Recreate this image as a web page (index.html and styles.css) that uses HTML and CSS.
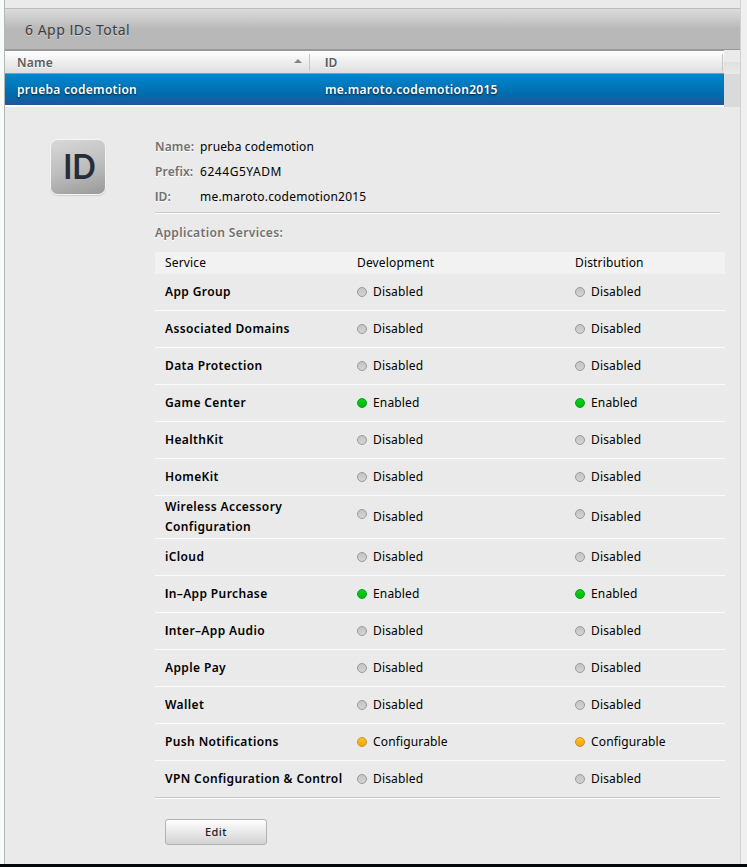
FILE: index.html
```html
<!DOCTYPE html>
<html lang="en">
<head>
<meta charset="utf-8">
<title>App IDs</title>
<link rel="stylesheet" href="styles.css">
</head>
<body>
<div class="page">
<main class="panel">
  <h1 class="title">6 App <i>I</i>Ds Total</h1>
  <div class="list">
    <div class="grid">
      <div class="cols">
        <span class="col-name">Name</span>
        <svg class="sort" width="8" height="4" viewBox="0 0 8 4"><path d="M4 0L8 4H0Z" fill="#858585"/></svg>
        <span class="col-id"><i>I</i>D</span>
      </div>
      <div class="selected"><span class="sel-name">prueba codemotion</span><span class="sel-id">me.maroto.codemotion2015</span></div>
    </div>
    <div class="gutter"></div>
  </div>
  <section class="detail">
    <div class="icon"><span>ID</span></div>
    <div class="info">
      <dl class="facts">
        <dt>Name:</dt><dd class="f1">prueba codemotion</dd>
        <dt>Prefix:</dt><dd class="f2">6244G5YADM</dd>
        <dt><i>I</i>D:</dt><dd class="f3">me.maroto.codemotion2015</dd>
      </dl>
      <h2 class="subtitle">Application Services:</h2>
      <div class="services">
        <div class="row head"><span>Service</span><span>Development</span><span>Distribution</span></div>
        <div class="row"><b>App Group</b><span class="st">Disabled</span><span class="st">Disabled</span></div>
        <div class="row"><b>Associated Domains</b><span class="st">Disabled</span><span class="st">Disabled</span></div>
        <div class="row"><b>Data Protection</b><span class="st">Disabled</span><span class="st">Disabled</span></div>
        <div class="row"><b>Game Center</b><span class="st on">Enabled</span><span class="st on">Enabled</span></div>
        <div class="row"><b>HealthKit</b><span class="st">Disabled</span><span class="st">Disabled</span></div>
        <div class="row"><b>HomeKit</b><span class="st">Disabled</span><span class="st">Disabled</span></div>
        <div class="row tall"><b>Wireless Accessory<br>Configuration</b><span class="st">Disabled</span><span class="st">Disabled</span></div>
        <div class="row"><b>iCloud</b><span class="st">Disabled</span><span class="st">Disabled</span></div>
        <div class="row"><b><i>I</i>n–App Purchase</b><span class="st on">Enabled</span><span class="st on">Enabled</span></div>
        <div class="row"><b><i>I</i>nter–App Audio</b><span class="st">Disabled</span><span class="st">Disabled</span></div>
        <div class="row"><b>Apple Pay</b><span class="st">Disabled</span><span class="st">Disabled</span></div>
        <div class="row"><b>Wallet</b><span class="st">Disabled</span><span class="st">Disabled</span></div>
        <div class="row"><b>Push Notifications</b><span class="st conf">Configurable</span><span class="st conf">Configurable</span></div>
        <div class="row last"><b>VPN Configuration &amp; Control</b><span class="st">Disabled</span><span class="st">Disabled</span></div>
      </div>
      <button class="edit">Edit</button>
    </div>
  </section>
</main>
</div>
</body>
</html>
```
FILE: styles.css
```css
* { box-sizing: border-box; }
body {
  margin: 0;
  height: 867px;
  overflow: hidden;
  background: #04080a;
  color: #000;
  font: 12px/20px "Lucida Grande", "Noto Sans", "Open Sans", sans-serif;
  letter-spacing: 0.15px;
}
/* Capital I without serifs */
i { font-family: "Lucida Grande", "Liberation Sans", sans-serif; font-style: normal; line-height: 1; }
b i, dt i, .col-id i { font-weight: 700; }
.page {
  height: 864px;
  padding: 0 6px 0 4px;
  background: linear-gradient(90deg, #f8fbfa 50%, #f0f0f0 50%);
}
.panel {
  height: 864px;
  padding-top: 8px;
  background: #eaeaea;
  border-left: 1px solid #b4b8b8;
  border-right: 1px solid #d0d0d0;
}
.title {
  margin: 0;
  height: 43px;
  padding-left: 20px;
  border-top: 1px solid #bdbdbd;
  border-bottom: 2px solid #999;
  background: linear-gradient(#dcdcdc, #b8b8b8 50%, #b8b8b8);
  color: #3d3d3d;
  font-size: 14px;
  font-weight: 400;
  line-height: 41px;
  letter-spacing: 0.5px;
  text-shadow: 0 1px 0 rgba(255, 255, 255, .4);
}
.list { display: flex; }
.grid { width: 719px; }
.cols {
  display: flex;
  align-items: center;
  height: 23px;
  padding: 0 1px 0 12px;
  border-bottom: 1px solid #999;
  background: linear-gradient(#fff, #dedede);
  color: #5c5c5c;
  font-weight: 600;
  text-shadow: 0 1px 0 #fff;
}
.col-name { width: 277px; padding-top: 1px; letter-spacing: 0.2px; }
.sort { margin: -3px 7px 0 0; }
.col-id {
  flex: 1;
  height: 17px;
  padding-left: 15px;
  border-left: 1px solid #c6c6c6;
  border-right: 1px solid #c6c6c6;
  line-height: 17px;
}
.selected {
  display: flex;
  height: 33px;
  padding-left: 12px;
  border-bottom: 2px solid #fff;
  background: linear-gradient(#0087cd, #006cae 65%, #24559a);
  color: #fff;
  font-weight: 600;
  line-height: 31px;
  letter-spacing: 0.28px;
  text-shadow: 0 1px 2px rgba(0, 0, 0, .75);
}
.sel-name { width: 308px; }
.gutter {
  flex: 1;
  margin-top: -1px;
  background: linear-gradient(#ebebeb 12px, #e0e0e0 12px, #eaeaea 24px, #d9dadc 24px);
}
.detail { display: flex; padding: 27px 0 0 46px; }
.icon {
  flex: none;
  width: 54px;
  height: 54px;
  margin: 6px 50px 0 0;
  border-radius: 7px;
  background: linear-gradient(165deg, #d8d8d8, #bcbcbc 55%, #999);
  box-shadow: 0 0 0 1px #f5f5f5, 0 1px 1px 1px #ccc;
  color: #252d38;
  font: 700 35px/50px "Lucida Grande", Lato, sans-serif;
  letter-spacing: 0;
  text-align: center;
}
.icon span { display: inline-block; transform: translateX(1px) scaleX(0.88); }
.info { width: 570px; }
.facts {
  display: grid;
  grid-template-columns: 45px 1fr;
  width: 565px;
  margin: 0;
  height: 80px;
  grid-auto-rows: 25px;
  line-height: 25px;
  border-bottom: 1px solid #fff;
  box-shadow: inset 0 -1px #c8c8c8;
}
dt { color: #707070; font-weight: 600; text-shadow: 0 1px 0 #fff; }
dd { margin: 0; }
.f2 { letter-spacing: 0.55px; }
.f3 { letter-spacing: 0.22px; }
.subtitle {
  margin: 9px 0;
  color: #707070;
  font-size: 12px;
  line-height: 20px;
  font-weight: 600;
  letter-spacing: 0.37px;
  text-shadow: 0 1px 0 #fff;
}
.row {
  display: grid;
  grid-template-columns: 192px 218px 1fr;
  align-items: center;
  height: 37px;
  padding-left: 10px;
  border-bottom: 1px solid #fbfbfb;
}
.row b { font-weight: 600; white-space: nowrap; letter-spacing: 0.38px; }
.head { height: 22px; border: 0; background: #f2f2f2; }
.tall { height: 43px; }
.last {
  width: 565px;
  height: 38px;
  padding-bottom: 1px;
  border-bottom-color: #fff;
  box-shadow: inset 0 -1px #c6c6c6;
}
.st { display: flex; align-items: center; }
.st::before {
  content: "";
  box-sizing: border-box;
  width: 10px;
  height: 10px;
  margin-right: 6px;
  border: 1px solid #999;
  border-radius: 50%;
  background: linear-gradient(#c4c4c4, #d4d4d4);
}
.tall .st::before { margin-top: -6px; }
.on::before { border-color: #089c12; background: linear-gradient(#00d414, #04b80e); }
.conf::before { border-color: #c2903a; background: linear-gradient(#ffc800, #f0a020); }
.edit {
  display: block;
  width: 102px;
  height: 26px;
  margin: 20px 0 0 10px;
  padding: 0;
  border: 1px solid #b2b2b2;
  border-radius: 3px;
  background: linear-gradient(#fff, #d2d2d2);
  color: #222;
  font: 500 11px/24px "Lucida Grande", "Noto Sans", sans-serif;
  letter-spacing: 0.5px;
}
```
